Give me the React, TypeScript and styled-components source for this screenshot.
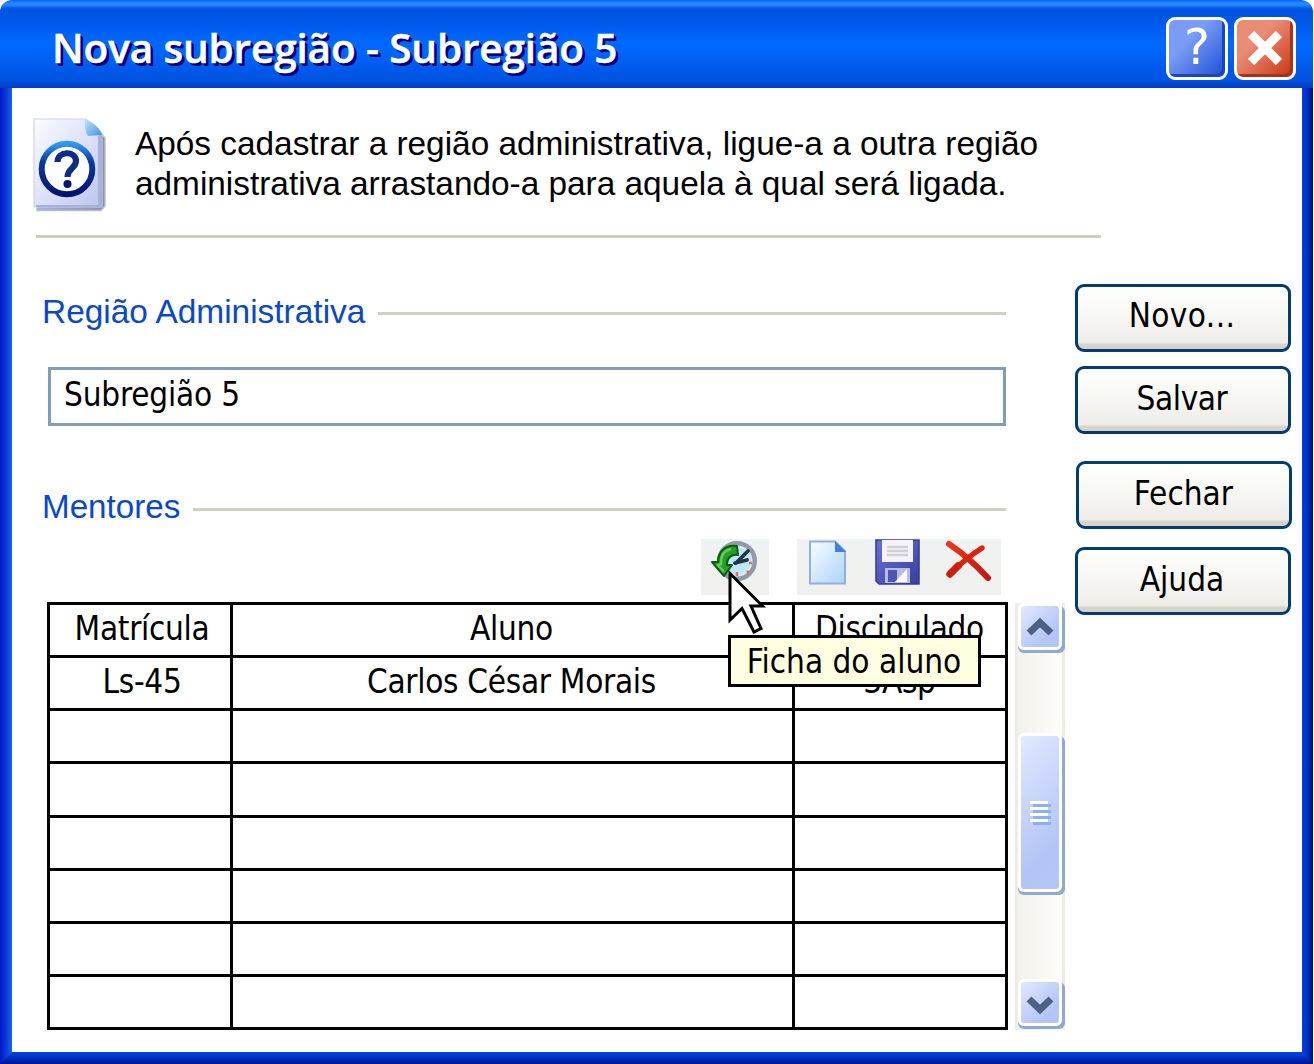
import React from "react";
import styled, { createGlobalStyle } from "styled-components";

const ui = `"DejaVu Sans Condensed", "DejaVu Sans", sans-serif`;
const arial = `"Liberation Sans", Arial, sans-serif`;

const GlobalStyle = createGlobalStyle`
  * { box-sizing: border-box; }
  body { margin: 0; background: #fff; }
`;

const Window = styled.div`
  width: 1313px;
  height: 1064px;
  display: grid;
  grid-template: 88px 964px 12px / 12px 1290px 11px;
  border-radius: 12px 12px 0 0;
  overflow: hidden;
  background: #fff;
  color: #000;
`;

const TitleBar = styled.header`
  grid-column: 1 / -1;
  display: flex;
  align-items: center;
  justify-content: space-between;
  padding: 8px 17px 0 52px;
  background: linear-gradient(
    #0a63ee 0, #1c7dfa 2px, #2a8cff 4px, #1f7dfb 6px, #0659e8 8px, #0054e3 11px,
    #0058ea 22px, #0068ff 42px, #0066fb 52px, #0058e8 70px, #0054e2 80px, #0049d4 83px, #003fc9 88px
  );
`;

const Title = styled.h1`
  margin: 0;
  font: 600 40.5px/50px "Open Sans", "Noto Sans", sans-serif;
  letter-spacing: -0.14px;
  color: #fff;
  -webkit-text-stroke: 0.5px #fff;
  text-shadow: 1px 1px 0 #00007c, 2px 2px 0 #00007c, 3px 3px 0 #00007c;
`;

const Caption = styled.div`
  display: flex;
  gap: 6px;
`;

const CaptionButton = styled.button<{ $from: string; $to: string; $edge: string }>`
  width: 62px;
  height: 63px;
  padding: 0;
  display: grid;
  place-items: center;
  border: 3px solid #fff;
  border-radius: 9px;
  background: linear-gradient(135deg, ${(p) => p.$from} 35%, ${(p) => p.$to});
  box-shadow: inset -3px -3px 0 ${(p) => p.$edge};
  color: #fff;
  font: 49px/56px "DejaVu Sans", sans-serif;
`;

const LeftEdge = styled.div`
  background: linear-gradient(90deg, #0014c8, #0a3bd8 50%, #1862ea);
`;

const RightEdge = styled.div`
  background: linear-gradient(90deg, #003fdd, #0034cf 35%, #001f9f 75%, #00128a);
`;

const BottomRow = styled.div`
  grid-column: 1 / -1;
  display: grid;
  background: linear-gradient(
    90deg, #0014c8, #0a3bd8 6px, #1862ea 12px, #003fdd calc(100% - 11px),
    #0034cf calc(100% - 7px), #001f9f calc(100% - 3px), #00128a
  );
`;

const BottomEdge = styled.div`
  background: linear-gradient(#0046e4, #0034cf 40%, #001f9f 80%, #00128a);
  clip-path: polygon(12px 0, calc(100% - 11px) 0, 100% 100%, 0 100%);
`;

const Body = styled.main`
  padding: 30px 0 0 21px;
`;

const Intro = styled.section`
  display: flex;
  gap: 27px;
  width: 1068px;
  height: 117px;
`;

const IntroText = styled.p`
  margin: 6px 0 0;
  font: 33.37px/40px ${arial};
  white-space: nowrap;
`;

const Rule = styled.hr`
  margin: 0 0 0 3px;
  width: 1065px;
  height: 3px;
  border: 0;
  background: #cdcebe;
`;

const Columns = styled.div`
  display: grid;
  grid-template-columns: 1033px 217px;
  padding: 45px 0 0 9px;
`;

const Form = styled.section`
  display: flex;
  flex-direction: column;
`;

const Legend = styled.h2<{ $size: number; $drop: number }>`
  margin: ${(p) => 8 + p.$drop}px 0 ${(p) => -p.$drop}px;
  width: 964px;
  display: flex;
  align-items: center;
  gap: 13px;
  font: ${(p) => p.$size}px/40px ${arial};
  color: #0b48c8;

  &::after {
    content: "";
    flex: 1;
    height: 3px;
    margin-top: ${(p) => 4 - 2 * p.$drop}px;
    background: #d0d1c1;
  }
`;

const Field = styled.input`
  margin: 36px 0 53px 6px;
  width: 958px;
  height: 59px;
  padding: 0 13px 5px;
  border: 3px solid #7f9db9;
  background: #fff;
  outline: none;
  color: #000;
  font: 33px ${ui};
  letter-spacing: -0.2px;
`;

const Tools = styled.div`
  display: flex;
  gap: 28px;
  margin: 12px 0 7px 659px;
  position: relative;
`;

const ToolGroup = styled.div<{ $width: number }>`
  width: ${(p) => p.$width}px;
  height: 56px;
  display: flex;
  background: linear-gradient(#eff3f3, #f0f0ec);
`;

const Pointer = styled.svg`
  position: absolute;
  left: 26px;
  top: 30px;
  z-index: 3;
`;

const Tooltip = styled.div`
  position: absolute;
  z-index: 2;
  left: 27px;
  top: 96px;
  width: 253px;
  height: 52px;
  padding-right: 1px;
  border: 3px solid #000;
  background: #ffffe1;
  text-align: center;
  white-space: nowrap;
  font: 33px/48px ${ui};
`;

const ListArea = styled.div`
  display: flex;
  gap: 7px;
  padding-left: 5px;
`;

const Table = styled.div`
  width: 961px;
  height: 428px;
  display: grid;
  grid-template-columns: 180px 559px 1fr;
  grid-template-rows: repeat(8, 1fr);
  gap: 3px;
  padding: 3px;
  background: #000;
`;

const Cell = styled.div<{ $nudge: number }>`
  display: flex;
  align-items: center;
  justify-content: center;
  padding: 0 0 2px;
  padding-left: ${(p) => Math.max(0, p.$nudge)}px;
  padding-right: ${(p) => Math.max(0, -p.$nudge)}px;
  background: #fff;
  white-space: nowrap;
  font: 33px/40px ${ui};
  letter-spacing: -0.3px;
`;

const Track = styled.div`
  width: 50px;
  height: 427px;
  margin-top: 1px;
  display: flex;
  flex-direction: column;
  border: solid #edede5;
  border-width: 0 3px;
  background: linear-gradient(90deg, #f2f0eb, #fefefa);
`;

const Knob = styled.button<{ $height: number; $push?: number }>`
  flex: none;
  width: 44px;
  height: ${(p) => p.$height}px;
  margin: ${(p) => p.$push ?? 0}px 0 0;
  padding: 0;
  display: grid;
  place-items: center;
  border: 3px solid #fff;
  border-radius: 6px;
  background: linear-gradient(135deg, #e1eaff, #c5d2fa 45%, #b3c5f5 75%, #b5c6f4);
  box-shadow: 3px 3px 0 #8fa9d2, 0 3px 0 #8fa9d2;
`;

const Actions = styled.nav`
  display: flex;
  flex-direction: column;
  align-items: flex-start;
  padding-top: 0.6px;
`;

const Action = styled.button<{ $gap?: number; $indent?: number; $spacing?: number }>`
  width: 216px;
  height: 68px;
  margin: ${(p) => p.$gap ?? 0}px 0 0 ${(p) => p.$indent ?? 0}px;
  padding: 0 2px 3px 0;
  border: 3px solid #003c74;
  border-radius: 9px;
  background: linear-gradient(#fff, #f8f8f5 40%, #edece8 56px, #d9d5cb 57px, #d6d1c6);
  color: #000;
  font: 33px/40px ${ui};
  letter-spacing: ${(p) => p.$spacing ?? 0}px;
`;

const HelpPage = () => (
  <svg width="75" height="96" viewBox="0 0 75 96">
    <defs>
      <linearGradient id="pg" x1="0" y1="0" x2="1" y2="1">
        <stop offset="0" stopColor="#fafcff" />
        <stop offset=".45" stopColor="#e0e4fa" />
        <stop offset="1" stopColor="#bcc4ee" />
      </linearGradient>
      <linearGradient id="ring" x1="0" y1="0" x2="0" y2="1">
        <stop offset="0" stopColor="#2e9bee" />
        <stop offset=".35" stopColor="#0c3a9c" />
        <stop offset="1" stopColor="#03136f" />
      </linearGradient>
      <linearGradient id="fold" x1="0" y1="0" x2="1" y2="1">
        <stop offset="0" stopColor="#c4e6fb" />
        <stop offset="1" stopColor="#3d93dc" />
      </linearGradient>
      <linearGradient id="fall" x1="0" y1="0" x2="1" y2="0">
        <stop offset="0" stopColor="#a8b1dc" />
        <stop offset="1" stopColor="#8d90a4" />
      </linearGradient>
    </defs>
    <path d="M4 92.5H68L72 88V20L68 15V88H4Z" fill="url(#fall)" stroke="#b9bcc9" strokeWidth="1.4" />
    <path d="M1 1H53L69 17V89H1Z" fill="url(#pg)" stroke="#cdd2f0" strokeWidth="1.2" />
    <path d="M65 18L69 17V89H3V87H65Z" fill="#a8b1dc" />
    <path d="M52 1C60 4 68 11 69 17L55 18Q51 12 52 1Z" fill="url(#fold)" />
    <circle cx="34" cy="51" r="25.3" fill="#fff" stroke="url(#ring)" strokeWidth="6" />
    <path d="M24.5 44C24.5 32.5 43 32.5 43 43C43 50.5 34.5 50 34.5 59" fill="none" stroke="#0c2f84" strokeWidth="6.2" />
    <circle cx="34.5" cy="66" r="4" fill="#03136f" />
  </svg>
);

const HistoryIcon = () => (
  <svg width="68" height="56" viewBox="0 0 68 56">
    <circle cx="36" cy="22" r="17.5" fill="#b9e2f7" stroke="#929aa6" strokeWidth="5" />
    <circle cx="36" cy="22" r="14.5" fill="#bde6fb" stroke="#dfe8f0" strokeWidth="2" />
    <path d="M35 24L47 12M34 24L46 21" stroke="#243646" strokeWidth="3.8" strokeLinecap="round" />
    <path d="M36 33v4M48 24h3M46 32l2 2" stroke="#e2704e" strokeWidth="2.5" />
    <path d="M36 7C24 5 17 13 17 23H11L23 37L31 26H26C26 18 31 15 37 16Z" fill="#2a9c28" stroke="#0b5c14" strokeWidth="2" strokeLinejoin="round" />
    <path d="M30 10C22 12 20 17 20 25L17 26L23 33" fill="none" stroke="#62cc50" strokeWidth="2.5" />
  </svg>
);

const EditIcons = () => (
  <svg width="204" height="56" viewBox="0 0 204 56">
    <defs>
      <linearGradient id="doc" x1="0" y1="0" x2="1" y2="1">
        <stop offset="0" stopColor="#fbfdff" />
        <stop offset="1" stopColor="#a9d3fb" />
      </linearGradient>
      <linearGradient id="cross" x1="0" y1="0" x2="1" y2="1">
        <stop offset="0" stopColor="#f0341c" />
        <stop offset="1" stopColor="#c01810" />
      </linearGradient>
      <linearGradient id="disk" x1="0" y1="0" x2="1" y2="1">
        <stop offset="0" stopColor="#6870d4" />
        <stop offset="1" stopColor="#373f9e" />
      </linearGradient>
    </defs>
    <path d="M13 2.5H38L48 12V44.5H13Z" fill="url(#doc)" stroke="#93aee2" strokeWidth="2" />
    <path d="M38 2L49 13H38Z" fill="#3f7fdb" />
    <path d="M79 1H122V45H82L79 42Z" fill="url(#disk)" stroke="#3a3f92" strokeWidth="1.6" />
    <rect x="85" y="1" width="31" height="22" fill="#f4f4f6" />
    <path d="M90 8H111M90 12H111M90 16H111" stroke="#cfd0d5" strokeWidth="2.4" />
    <rect x="88" y="29" width="25" height="15" fill="#b9bbe0" />
    <rect x="91" y="31" width="9" height="12" fill="#4f56b2" />
    <path d="M98 43L110 30V43Z" fill="#fff" />
    <path d="M152 5C164 13 180 27 191 39" stroke="url(#cross)" strokeWidth="6" strokeLinecap="round" fill="none" />
    <path d="M185 9C174 16 163 25 153 35" stroke="#d9240f" strokeWidth="5.4" strokeLinecap="round" fill="none" />
    <path d="M161 27L153 35" stroke="#cd1d0e" strokeWidth="7.4" strokeLinecap="round" />
  </svg>
);

const Chevron = ({ down }: { down?: boolean }) => (
  <svg width="28" height="22" viewBox="0 0 28 22">
    <path
      d={down ? "M3 7L14 17.5L25 7" : "M3 17L14 6.5L25 17"}
      fill="none"
      stroke="#4d6185"
      strokeWidth="7"
    />
  </svg>
);

const Grip = () => (
  <svg width="21" height="24" viewBox="0 0 21 24">
    {[0, 6, 12, 18].map((y) => (
      <g key={y}>
        <rect x="3" y={y + 3} width="18" height="3" fill="#8cb0f0" />
        <rect x="0" y={y} width="18" height="3" fill="#fff" />
      </g>
    ))}
  </svg>
);

const nudges = [4, -2, -1];

const rows: [string, string, string][] = [
  ["Matrícula", "Aluno", "Discipulado"],
  ["Ls-45", "Carlos César Morais", "3Asp"],
  ...Array.from({ length: 6 }, () => ["", "", ""] as [string, string, string]),
];

export default function App() {
  return (
    <>
      <GlobalStyle />
      <Window>
        <TitleBar>
          <Title>Nova subregião - Subregião 5</Title>
          <Caption>
            <CaptionButton $from="#7a9cf6" $to="#1c4cd6" $edge="#1a45bb">?</CaptionButton>
            <CaptionButton $from="#ea8b74" $to="#c93410" $edge="#a8331a">
              <svg width="34" height="34" viewBox="0 0 34 34">
                <path d="M3 3L31 31M31 3L3 31" stroke="#fff" strokeWidth="9" />
              </svg>
            </CaptionButton>
          </Caption>
        </TitleBar>
        <LeftEdge />
        <Body>
          <Intro>
            <HelpPage />
            <IntroText>
              Após cadastrar a região administrativa, ligue-a a outra região
              <br />
              administrativa arrastando-a para aquela à qual será ligada.
            </IntroText>
          </Intro>
          <Rule />
          <Columns>
            <Form>
              <Legend $size={33.45} $drop={1}>Região Administrativa</Legend>
              <Field defaultValue="Subregião 5" />
              <Legend $size={33.2} $drop={0}>Mentores</Legend>
              <Tools>
                <ToolGroup $width={68}>
                  <HistoryIcon />
                </ToolGroup>
                <ToolGroup $width={204}>
                  <EditIcons />
                </ToolGroup>
                <Pointer width="40" height="66" viewBox="0 0 40 66">
                  <path d="M3 4.5V51L15 39.5L27 63L34 59.5L24 37H35.5Z" fill="#fff" stroke="#000" strokeWidth="3" />
                </Pointer>
                <Tooltip>Ficha do aluno</Tooltip>
              </Tools>
              <ListArea>
                <Table>
                  {rows.map((row, r) =>
                    row.map((text, c) => (
                      <Cell key={`${r}-${c}`} $nudge={nudges[c]}>
                        {text}
                      </Cell>
                    ))
                  )}
                </Table>
                <Track>
                  <Knob $height={47}>
                    <Chevron />
                  </Knob>
                  <Knob $height={159} $push={83}>
                    <Grip />
                  </Knob>
                  <Knob $height={47} $push={87}>
                    <Chevron down />
                  </Knob>
                </Track>
              </ListArea>
            </Form>
            <Actions>
              <Action $spacing={0.4}>Novo...</Action>
              <Action $gap={14.5} $spacing={-0.4}>Salvar</Action>
              <Action $gap={27} $indent={1.4}>Fechar</Action>
              <Action $gap={18}>Ajuda</Action>
            </Actions>
          </Columns>
        </Body>
        <RightEdge />
        <BottomRow>
          <BottomEdge />
        </BottomRow>
      </Window>
    </>
  );
}
